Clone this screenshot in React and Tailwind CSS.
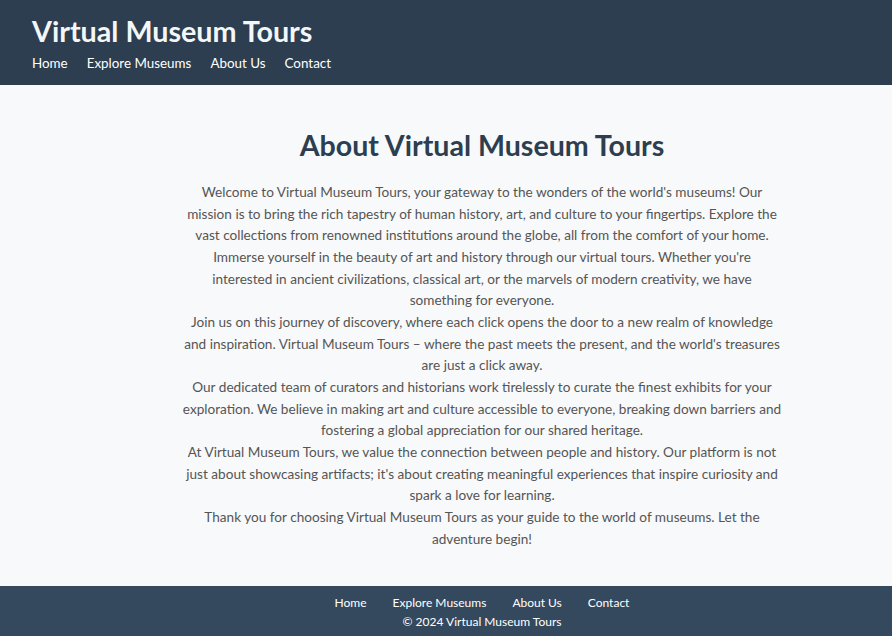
import React from 'react';

const navLinks = ['Home', 'Explore Museums', 'About Us', 'Contact'];

const paragraphs = [
  "Welcome to Virtual Museum Tours, your gateway to the wonders of the world's museums! Our mission is to bring the rich tapestry of human history, art, and culture to your fingertips. Explore the vast collections from renowned institutions around the globe, all from the comfort of your home. Immerse yourself in the beauty of art and history through our virtual tours. Whether you're interested in ancient civilizations, classical art, or the marvels of modern creativity, we have something for everyone.",
  "Join us on this journey of discovery, where each click opens the door to a new realm of knowledge and inspiration. Virtual Museum Tours – where the past meets the present, and the world's treasures are just a click away.",
  "Our dedicated team of curators and historians work tirelessly to curate the finest exhibits for your exploration. We believe in making art and culture accessible to everyone, breaking down barriers and fostering a global appreciation for our shared heritage.",
  "At Virtual Museum Tours, we value the connection between people and history. Our platform is not just about showcasing artifacts; it's about creating meaningful experiences that inspire curiosity and spark a love for learning.",
  "Thank you for choosing Virtual Museum Tours as your guide to the world of museums. Let the adventure begin!",
];

export default function App() {
  return (
    <div className="min-h-screen flex flex-col bg-[#f8f9fa] font-['Segoe_UI','Lato',sans-serif]">
      {/* header */}
      <header className="bg-[#2c3e50] text-white px-8 pt-[13px] h-[85px]">
        <h1 className="text-[28.7px] font-bold leading-[36px] text-[#f4f6f8]">Virtual Museum Tours</h1>
        <nav className="flex gap-[19px] mt-[4px] text-[13.4px] leading-[20px]">
          {navLinks.map((l) => (
            <a key={l} href="#" className="text-white">{l}</a>
          ))}
        </nav>
      </header>

      {/* about */}
      <main className="flex-1 pt-[43px]">
        <div className="ml-[182px] w-[600px] text-center">
          <h2 className="text-[28.6px] font-bold text-[#2c3e50] leading-[34px] mb-[20px]">About Virtual Museum Tours</h2>
          {paragraphs.map((p, i) => (
            <p key={i} className="text-[13.6px] leading-[21.65px] text-[#555]">{p}</p>
          ))}
        </div>
      </main>

      {/* footer */}
      <footer className="bg-[#34495e] text-white h-[50px] mt-[28px] flex flex-col items-center pl-[72px] pt-[8px] text-[12px] leading-[18px]">
        <nav className="flex gap-[26px]">
          {navLinks.map((l) => (
            <a key={l} href="#">{l}</a>
          ))}
        </nav>
        <p className="mt-[1px]">© 2024 Virtual Museum Tours</p>
      </footer>
    </div>
  );
}
